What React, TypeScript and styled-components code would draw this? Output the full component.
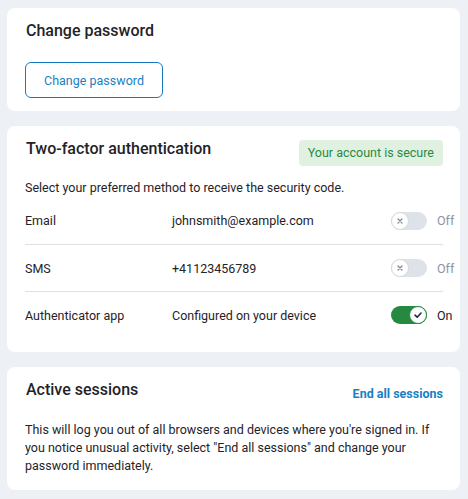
import React from "react";
import styled, { createGlobalStyle } from "styled-components";

const Global = createGlobalStyle`
  html, body { margin: 0; padding: 0; background: #edf1f5; }
  body { font-family: Roboto, "Noto Sans", Arial, sans-serif; color: #1f2328; }
  * { box-sizing: border-box; }
`;

const Page = styled.div`
  display: flex;
  flex-direction: column;
  gap: 15px;
  padding: 8px 8px 10px 7px;
`;

const Card = styled.section<{ $bottom?: number }>`
  background: #fff;
  border-radius: 8px;
  padding: 13px 17px ${(p) => p.$bottom ?? 14}px 18px;
`;

const Header = styled.div`
  display: flex;
  align-items: flex-start;
  justify-content: space-between;
`;

const Title = styled.h2`
  margin: 0;
  font-size: 16px;
  line-height: 19px;
  font-weight: 500;
  color: #1f2328;
  padding-left: 1px;
`;

const OutlineButton = styled.button`
  display: block;
  margin-top: 22px;
  width: 138px;
  height: 36px;
  border: 1px solid #1479bf;
  border-radius: 6px;
  background: #fff;
  color: #1a7fc4;
  font-family: inherit;
  font-size: 12.5px;
  cursor: pointer;
`;

const Badge = styled.span`
  margin-top: 1px;
  background: #e0f1e2;
  color: #2b8a3e;
  font-size: 12.5px;
  padding: 0 9px;
  height: 26px;
  line-height: 26px;
  border-radius: 4px;
`;

const Text = styled.p<{ $top?: number }>`
  margin: ${(p) => p.$top ?? 0}px 0 0;
  font-size: 12.5px;
  line-height: 18px;
  color: #1f2328;
`;

const Rows = styled.div`
  display: flex;
  flex-direction: column;
`;

const Row = styled.div`
  display: grid;
  grid-template-columns: 147px 1fr 52px;
  align-items: center;
  height: 47px;
  font-size: 12.5px;
  color: #1f2328;
  & + & {
    border-top: 1px solid #dce1e6;
  }
`;

const ToggleWrap = styled.div`
  display: flex;
  align-items: center;
  gap: 10px;
`;

const Track = styled.span<{ $on: boolean }>`
  position: relative;
  flex-shrink: 0;
  width: 36px;
  height: 18px;
  border-radius: 9px;
  background: ${(p) => (p.$on ? "#258a3f" : "#dde3e9")};
`;

const Knob = styled.span<{ $on: boolean }>`
  position: absolute;
  top: 0;
  left: ${(p) => (p.$on ? "18px" : "0")};
  width: 18px;
  height: 18px;
  border-radius: 50%;
  background: #fff;
  border: 1px solid ${(p) => (p.$on ? "#258a3f" : "#d3d9df")};
  display: flex;
  align-items: center;
  justify-content: center;
`;

const ToggleLabel = styled.span<{ $on: boolean }>`
  flex-shrink: 0;
  white-space: nowrap;
  font-size: 12.5px;
  color: ${(p) => (p.$on ? "#1f2328" : "#8b96a2")};
`;

const LinkButton = styled.a`
  margin-top: 1px;
  height: 26px;
  line-height: 26px;
  font-size: 12.5px;
  font-weight: 700;
  color: #1a7fc4;
  text-decoration: none;
`;

function Toggle({ on }: { on: boolean }) {
  return (
    <ToggleWrap>
      <Track $on={on}>
        <Knob $on={on}>
          {on ? (
            <svg width="10" height="10" viewBox="0 0 10 10">
              <path d="M2 5.2 L4.2 7.2 L8 3" fill="none" stroke="#1d2a44" strokeWidth="1.6" strokeLinecap="round" strokeLinejoin="round" />
            </svg>
          ) : (
            <svg width="8" height="8" viewBox="0 0 8 8">
              <path d="M2 2 L6 6 M6 2 L2 6" stroke="#7d8794" strokeWidth="1.2" strokeLinecap="round" />
            </svg>
          )}
        </Knob>
      </Track>
      <ToggleLabel $on={on}>{on ? "On" : "Off"}</ToggleLabel>
    </ToggleWrap>
  );
}

const methods = [
  { label: "Email", value: "johnsmith@example.com", on: false },
  { label: "SMS", value: "+41123456789", on: false },
  { label: "Authenticator app", value: "Configured on your device", on: true },
];

export default function App() {
  return (
    <>
      <Global />
      <Page>
        <Card $bottom={13}>
          <Header>
            <Title>Change password</Title>
          </Header>
          <OutlineButton>Change password</OutlineButton>
        </Card>
        <Card $bottom={14}>
          <Header>
            <Title>Two-factor authentication</Title>
            <Badge>Your account is secure</Badge>
          </Header>
          <Text $top={13}>Select your preferred method to receive the security code.</Text>
          <Rows>
            {methods.map((m) => (
              <Row key={m.label}>
                <span>{m.label}</span>
                <span>{m.value}</span>
                <Toggle on={m.on} />
              </Row>
            ))}
          </Rows>
        </Card>
        <Card $bottom={15}>
          <Header>
            <Title>Active sessions</Title>
            <LinkButton href="#">End all sessions</LinkButton>
          </Header>
          <Text $top={14}>
            This will log you out of all browsers and devices where you're signed in. If you notice
            unusual activity, select "End all sessions" and change your password immediately.
          </Text>
        </Card>
      </Page>
    </>
  );
}
